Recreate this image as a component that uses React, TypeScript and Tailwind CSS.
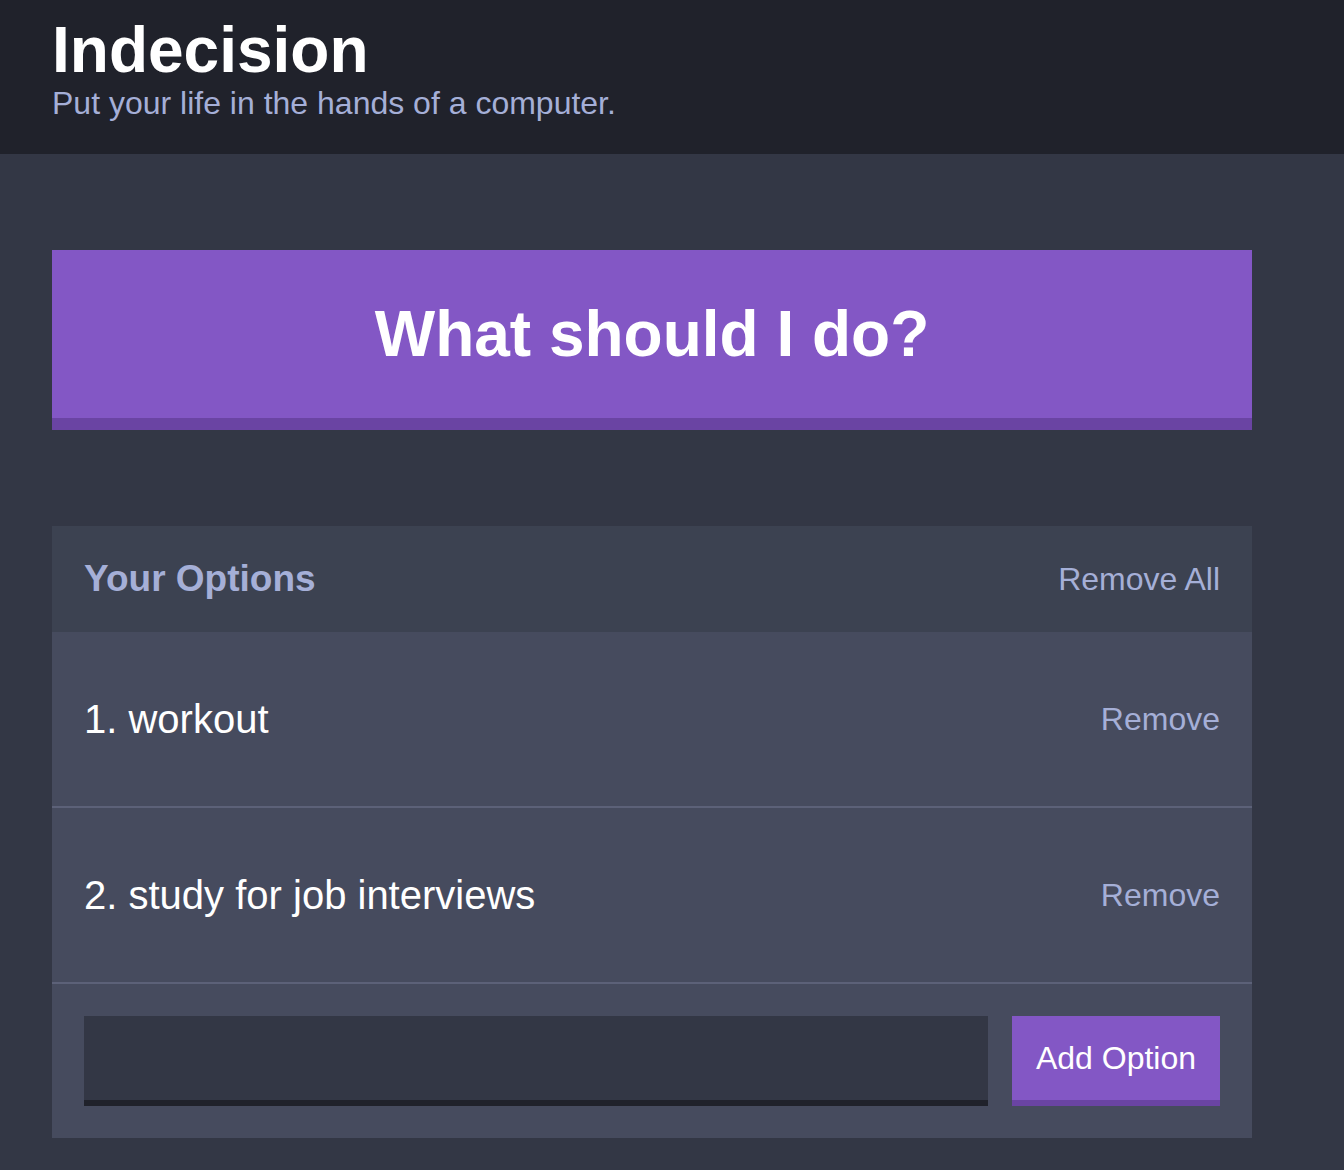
import React from "react";

export default function App() {
  const options = ["workout", "study for job interviews"];
  return (
    <div
      className="min-h-[1170px] bg-[#333745]"
      style={{ fontFamily: '"Liberation Sans", Arial, Helvetica, sans-serif' }}
    >
      <header className="h-[154px] bg-[#20222b] pl-[52px] pt-[18px]">
        <h1 className="text-[64px] font-bold leading-[64px] text-white">Indecision</h1>
        <h2 className="mt-[3px] text-[32px] leading-[36px] text-[#a5afd7]">
          Put your life in the hands of a computer.
        </h2>
      </header>
      <main className="ml-[52px] w-[1200px] pt-[96px]">
        <button className="flex h-[180px] w-full items-center justify-center border-b-[12px] border-[#6a44a3] bg-[#8357c5] text-[64px] font-bold text-white">
          What should I do?
        </button>
        <section className="mt-[96px] bg-[#464b5e]">
          <div className="flex h-[106px] items-center justify-between bg-[#3c4251] px-[32px]">
            <h3 className="text-[37px] font-bold text-[#a5afd7]">Your Options</h3>
            <button className="text-[32px] text-[#a5afd7]">Remove All</button>
          </div>
          {options.map((o, i) => (
            <div
              key={o}
              className="flex h-[176px] items-center justify-between border-b-2 border-[#5c6178] px-[32px]"
            >
              <p className="text-[40px] text-white">
                {i + 1}. {o}
              </p>
              <button className="text-[32px] text-[#a5afd7]">Remove</button>
            </div>
          ))}
          <form className="flex gap-[24px] p-[32px]" onSubmit={(e) => e.preventDefault()}>
            <input
              type="text"
              className="h-[90px] flex-1 border-b-[6px] border-[#20222b] bg-[#333745] px-4 text-[32px] text-white outline-none"
            />
            <button className="h-[90px] w-[208px] border-b-[6px] border-[#6a44a3] bg-[#8357c5] text-[32px] text-white">
              Add Option
            </button>
          </form>
        </section>
      </main>
    </div>
  );
}
